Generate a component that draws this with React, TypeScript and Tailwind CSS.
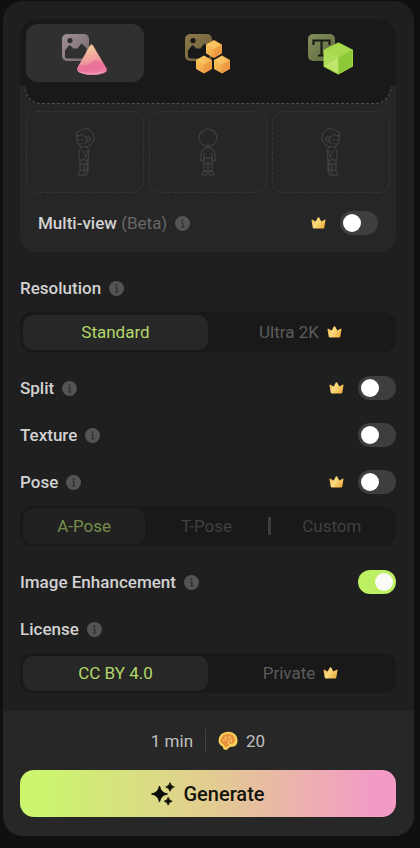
import { ReactNode, useId, useState } from "react";

function PictureBadge({ from, to, id }: { from: string; to: string; id: string }) {
  return (
    <>
      <defs>
        <linearGradient id={id} x1="0" y1="0" x2="1" y2="1">
          <stop offset="0" stopColor={from} />
          <stop offset="1" stopColor={to} />
        </linearGradient>
      </defs>
      <path
        fillRule="evenodd"
        fill={`url(#${id})`}
        d="M5 0h17a5 5 0 0 1 5 5v17a5 5 0 0 1-5 5H5a5 5 0 0 1-5-5V5a5 5 0 0 1 5-5ZM8 4a2.600 2.600 0 1 0 0 5.200a2.600 2.600 0 0 0 0-5.200ZM3 16.500V22q0 2.500 2.500 2.500h16Q24.500 24.500 24.500 22v-8l-5-4.500-4.500 5.500-1.500-1-1.500 1-4.500-4Z"
      />
    </>
  );
}

function ConeIcon() {
  return (
    <svg width="46" height="42" viewBox="0 0 46 42" aria-hidden="true">
      <PictureBadge id="badge-cone" from="#a08f98" to="#75666c" />
      <defs>
        <linearGradient id="cone" x1="0.4" y1="0" x2="0.6" y2="1">
          <stop offset="0" stopColor="#f6cf9c" />
          <stop offset="0.45" stopColor="#f0a39c" />
          <stop offset="0.75" stopColor="#ee7f9f" />
          <stop offset="1" stopColor="#f3a6bd" />
        </linearGradient>
      </defs>
      <path d="M28 11.500q1.500-2 3 0L44 33.500q2 3-2 5-5 2.500-12 2.500t-12.500-2.500q-3.500-2-2-5Z" fill="url(#cone)" />
      <path d="M17 31q7 2 12-2.500 3-3 7-2l5 2.500 4 6q1 2.500-2 4-12 4-24.500 0-4-1.500-2.500-5Z" fill="#e65f93" opacity="0.5" />
      <path d="M15.500 36.500q14 5 29 0-1 2-4 3-10 2-20 0-4-1-5-3Z" fill="#f8b4c8" opacity="0.5" />
    </svg>
  );
}

function Hexagon({ x, y }: { x: number; y: number }) {
  return (
    <g transform={`translate(${x} ${y})`}>
      <path d="M0-8 7-4V4L0 8-7 4V-4Z" fill="url(#hexagon)" stroke="url(#hexagon)" strokeWidth="2" strokeLinejoin="round" />
      <path d="M0-8 7-4 0 0-7-4Z" fill="#fbd176" opacity="0.45" />
      <path d="M0 0 7-4V4L0 8Z" fill="#e98a33" opacity="0.35" />
    </g>
  );
}

function HexagonsIcon() {
  return (
    <svg width="46" height="42" viewBox="0 0 46 42" aria-hidden="true">
      <PictureBadge id="badge-hex" from="#8d7a4b" to="#6b5b38" />
      <defs>
        <linearGradient id="hexagon" x1="0" y1="0" x2="1" y2="1">
          <stop offset="0" stopColor="#f9c95c" />
          <stop offset="1" stopColor="#ec9440" />
        </linearGradient>
      </defs>
      <Hexagon x={29} y={15} />
      <Hexagon x={19} y={30.5} />
      <Hexagon x={37} y={30.5} />
    </svg>
  );
}

function CubeIcon() {
  return (
    <svg width="46" height="42" viewBox="0 0 46 42" aria-hidden="true">
      <defs>
        <linearGradient id="badge-text" x1="0" y1="0" x2="1" y2="1">
          <stop offset="0" stopColor="#83905a" />
          <stop offset="1" stopColor="#5d6840" />
        </linearGradient>
      </defs>
      <rect width="27" height="27" rx="5" fill="url(#badge-text)" />
      <path d="M5.500 11V6.500h16V11M13.500 7v14.500M10 21.500h7" fill="none" stroke="#1b1d16" strokeWidth="2.200" />
      <path d="M30.500 9.500 44 16.500V32L30.500 39.500 16.500 32V16.500Z" fill="#9ed545" stroke="#9ed545" strokeWidth="2" strokeLinejoin="round" />
      <path d="M30.500 9.500 44 16.500 30.500 23.500 16.500 16.500Z" fill="#a6d94e" />
      <path d="M16.500 16.500 30.500 23.500V39.500L16.500 32Z" fill="#bfe56c" />
      <path d="M16.500 16.500 30.500 23.500 16.500 32Z" fill="#addc58" />
      <path d="M30.500 23.500 44 16.500V32L30.500 39.500Z" fill="#8cc838" />
    </svg>
  );
}

function ChildSide({ flipped = false }: { flipped?: boolean }) {
  return (
    <svg
      width="22"
      height="50"
      viewBox="0 0 22 50"
      fill="none"
      stroke="#454545"
      strokeWidth="1"
      strokeLinejoin="round"
      className={flipped ? "-scale-x-100" : ""}
      aria-hidden="true"
    >
      <path d="M3 9q-2-2 0-4 1 0 2 0 2-4 7-3 2-1 3 1 5 2 5 8 0 3-2 5-3 5-8 4-6 0-7-6-1-3 0-5Z" />
      <path d="M3 9q3 0 5-2 1 3 5 3 0 5-2 7M14 10q3 0 2 3-1 2-3 1M5 12v2M8 12v2M5 17h3" />
      <path d="M7 20q-3 4-2 9l1 4h8l1-9q0-3-3-4M8 23l4 6-3 4M13 23v6M6 33v12q-3 1-2 3h9V33M14 33v13M10 36v11M6 37h8M6 43h8" />
    </svg>
  );
}

function ChildBack() {
  return (
    <svg width="22" height="50" viewBox="0 0 22 50" fill="none" stroke="#454545" strokeWidth="1" strokeLinejoin="round" aria-hidden="true">
      <path d="m4 5 3-1 2-2 2-1 1 1.500 5 1.500 2 3 1 4-1 3q-2 5-8 5t-8-5l-1-4 1-3Z" />
      <path d="M9 19v2h4v-2M8 21q-4 2-4 7v6h3V26M14 21q4 2 4 7v6h-3V26M7 31h8v13H7ZM11 34v10M7 37h8M6 44h4v4H5ZM12 44h4l1 4h-5Z" />
    </svg>
  );
}

function InfoIcon() {
  return (
    <svg width="15" height="15" viewBox="0 0 15 15" aria-hidden="true">
      <circle cx="7.500" cy="7.500" r="7.500" fill="#545454" />
      <circle cx="7.500" cy="4.300" r="1" fill="#2c2c2c" />
      <path d="M6.300 6.800h1.500v4M6 11h3.500" fill="none" stroke="#2c2c2c" strokeWidth="1.200" />
    </svg>
  );
}

function CrownIcon() {
  return (
    <svg width="15" height="12" viewBox="0 0 15 12" aria-hidden="true">
      <defs>
        <linearGradient id="crown" x1="0" y1="0" x2="1" y2="0.600">
          <stop offset="0" stopColor="#efa93f" />
          <stop offset="0.500" stopColor="#fbdc80" />
          <stop offset="1" stopColor="#eeb145" />
        </linearGradient>
      </defs>
      <path d="M.5 3.200q0-1 1-.5L4.700 4.500 6.800.6q.7-.9 1.400 0l2.100 3.900 3.200-1.800q1-.5 1 .5L13.300 10.400q-.2 1.100-1.300 1.100H3q-1.100 0-1.300-1.100Z" fill="url(#crown)" />
    </svg>
  );
}

function TokenIcon() {
  return (
    <svg width="20" height="20" viewBox="0 0 20 20" aria-hidden="true">
      <path d="M10 .8q5.500 0 8.300 4 2 4 .7 7.700-1.500 3.300-4.500 3.300-2-.3-3.500 1-1.300 2.500-4 2-2.300-.8-2.300-3.200Q.5 13.500.5 9.500 1 1.500 10 .8Z" fill="#f8cf5c" />
      <path d="M3.500 12q-2-2.500 0-5 1-3.500 4.500-3.500 3-1.500 5 0 3 .5 3.200 3.500 1.500 3-.7 5-2 1.500-4 .5-1 3.500-4 4Q6 13 3.500 12Z" fill="#e8913a" />
      <path d="M5 9.500q1.500-2 3 0M7 6q2 0 2 2M11 5.500q0 2 2 2M10.500 13q-1-3 1.500-4M13.500 11q1-1 0-2" fill="none" stroke="#fbdc7c" strokeWidth="1" strokeLinecap="round" />
    </svg>
  );
}

function SparklesIcon() {
  return (
    <svg width="24" height="24" viewBox="0 0 24 24" fill="#0c0c08" aria-hidden="true">
      <path d="M8.500 4q1.200 6.800 8 8-6.800 1.200-8 8-1.200-6.800-8-8 6.800-1.200 8-8Z" stroke="#0c0c08" strokeWidth="1" strokeLinejoin="round" />
      <path d="M19 .7q.8 3.500 4.300 4.300-3.500.8-4.300 4.300-.8-3.500-4.300-4.300 3.500-.8 4.300-4.300ZM17.200 15.200q.7 3.300 4 4-3.300.7-4 4-.7-3.300-4-4 3.300-.7 4-4Z" stroke="#0c0c08" strokeWidth=".8" strokeLinejoin="round" />
    </svg>
  );
}

function SettingRow({ label, note, crown, on }: { label: string; note?: string; crown?: boolean; on?: boolean }) {
  const id = useId();
  return (
    <div className="flex h-6 items-center justify-between">
      <div className="flex items-center gap-2">
        <label htmlFor={id} className="whitespace-pre">
          {label}
          {note && <span className="font-normal text-[#686868]"> {note}</span>}
        </label>
        <InfoIcon />
      </div>
      <div className="flex items-center gap-[14px]">
        {crown && <CrownIcon />}
        <input
          id={id}
          type="checkbox"
          role="switch"
          defaultChecked={on}
          className="flex h-6 w-[38px] appearance-none items-center rounded-full bg-[#3e3e3e] px-[3px] before:size-[18px] before:rounded-full before:bg-white checked:justify-end checked:bg-[#bdf062] checked:before:bg-[#fafcf5]"
        />
      </div>
    </div>
  );
}

function GroupTitle({ children }: { children: ReactNode }) {
  return (
    <legend className="flex h-6 items-center gap-2">
      {children}
      <InfoIcon />
    </legend>
  );
}

function Segment({ name, label, crown, checked }: { name: string; label: string; crown?: boolean; checked?: boolean }) {
  return (
    <label className="relative flex h-[35px] flex-1 items-center justify-center gap-2 rounded-[10px] font-normal text-[#5c5c5c] has-checked:bg-[#272727] has-checked:text-[#b4d869]">
      <input type="radio" name={name} defaultChecked={checked} className="sr-only" />
      {label}
      {crown && <CrownIcon />}
    </label>
  );
}

const modes = [
  { name: "Image to model", icon: <ConeIcon /> },
  { name: "Images to model", icon: <HexagonsIcon /> },
  { name: "Text to model", icon: <CubeIcon /> },
];

const views = [
  { name: "Left view", drawing: <ChildSide /> },
  { name: "Back view", drawing: <ChildBack /> },
  { name: "Right view", drawing: <ChildSide flipped /> },
];

export default function App() {
  const [mode, setMode] = useState(0);
  return (
    <div className="min-h-screen bg-[#101010] pt-px pr-[6px] pl-[3px] font-[Roboto,'Liberation_Sans',sans-serif] text-[17px] leading-6 font-medium text-[#d2d2d2]">
      <main className="overflow-hidden rounded-[20px] bg-[#1f1f1f]">
        <div className="flex flex-col gap-6 pt-[18px] pr-[18px] pb-[18px] pl-[17px]">
          <section className="rounded-2xl bg-[#262626]">
            <div role="tablist" className="flex gap-[5px] rounded-t-2xl bg-[#191919] px-[6px] pt-[5px]">
              {modes.map((item, index) => (
                <button
                  key={item.name}
                  type="button"
                  role="tab"
                  aria-label={item.name}
                  aria-selected={mode === index}
                  onClick={() => setMode(index)}
                  className="flex h-[58px] flex-1 items-end justify-center rounded-xl pb-[6px] aria-selected:bg-[#303030]"
                >
                  {item.icon}
                </button>
              ))}
            </div>
            <div className="h-1 rounded-b bg-[#191919]" />
            <div className="mx-[5px] h-[18px] rounded-b-2xl border border-t-0 border-dashed border-[#525252] bg-[#191919]" />
            <div className="flex gap-[5px] px-[6px] pt-[7px]">
              {views.map((view) => (
                <button
                  key={view.name}
                  type="button"
                  aria-label={view.name}
                  className="flex h-[82px] flex-1 items-center justify-center rounded-xl border border-dashed border-[#373737]"
                >
                  {view.drawing}
                </button>
              ))}
            </div>
            <div className="px-[18px] pt-[18px] pb-[17px]">
              <SettingRow label="Multi-view" note="(Beta)" crown />
            </div>
          </section>

          <fieldset>
            <GroupTitle>Resolution</GroupTitle>
            <div className="mt-3 flex h-10 items-center rounded-xl bg-[#191919] px-[3px]">
              <Segment name="resolution" label="Standard" checked />
              <Segment name="resolution" label="Ultra 2K" crown />
            </div>
          </fieldset>

          <div className="flex flex-col gap-[23px]">
            <SettingRow label="Split" crown />
            <SettingRow label="Texture" />
            <div>
              <SettingRow label="Pose" crown />
              <div className="mt-3 flex h-10 items-center rounded-xl bg-[#191919] px-[3px]">
                <div className="flex flex-1 items-center opacity-60">
                  <Segment name="pose" label="A-Pose" checked />
                  <Segment name="pose" label="T-Pose" />
                  <div className="h-[18px] w-[3px] bg-[#555]" />
                  <Segment name="pose" label="Custom" />
                </div>
              </div>
            </div>
          </div>

          <div className="flex flex-col gap-[23px]">
            <SettingRow label="Image Enhancement" on />
            <fieldset>
              <GroupTitle>License</GroupTitle>
              <div className="mt-3 flex h-10 items-center rounded-xl bg-[#191919] px-[3px]">
                <Segment name="license" label="CC BY 4.0" checked />
                <Segment name="license" label="Private" crown />
              </div>
            </fieldset>
          </div>
        </div>

        <footer className="bg-[#272727] pt-[18px] pr-[18px] pb-[19px] pl-[17px]">
          <div className="flex h-6 items-center justify-center gap-3 font-normal text-[#c0c0c0]">
            <span>1 min</span>
            <div className="h-6 w-px bg-[#424242]" />
            <span className="flex items-center gap-2">
              <TokenIcon />
              20
            </span>
          </div>
          <button
            type="button"
            className="mt-[17px] flex h-[47px] w-full items-center justify-center gap-2 rounded-[14px] bg-linear-to-r/srgb from-[#cbf66d] from-5% via-[#e2cd90] via-50% to-[#f39ac6] to-95% text-xl text-[#14130c]"
          >
            <SparklesIcon />
            Generate
          </button>
        </footer>
      </main>
    </div>
  );
}
